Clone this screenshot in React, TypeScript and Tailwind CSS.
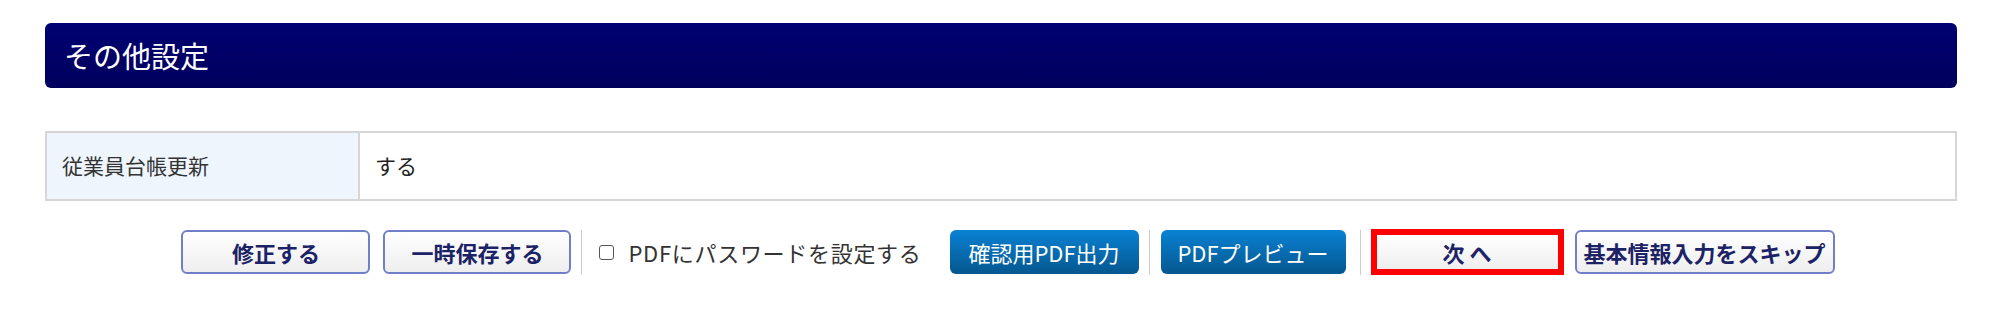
const font = { fontFamily: '"Noto Sans CJK JP", "Noto Sans", sans-serif' }

function WhiteButton({ label, className = "" }: { label: string; className?: string }) {
  return (
    <button
      className={`h-[44px] rounded-[6px] border-2 border-[#6f80c9] bg-gradient-to-b from-white to-[#eeeeee] text-[22px] font-bold leading-none text-[#1c2266] ${className}`}
    >
      {label}
    </button>
  )
}

function BlueButton({ label, className = "" }: { label: string; className?: string }) {
  return (
    <button
      className={`h-[44px] rounded-[6px] bg-gradient-to-b from-[#0a82d4] to-[#05578f] text-[22px] leading-none text-white ${className}`}
    >
      {label}
    </button>
  )
}

function Divider({ className = "" }: { className?: string }) {
  return <div className={`h-[45px] w-px bg-[#cccccc] ${className}`} />
}

export default function App() {
  return (
    <div className="min-h-[309px] bg-white pl-[45px] pr-[43px] pt-[23px]" style={font}>
      <div className="flex h-[65px] items-center rounded-[6px] bg-gradient-to-b from-[#000073] to-[#00005c] pl-[19px]">
        <h2 className="text-[29px] font-normal leading-none text-white">その他設定</h2>
      </div>

      <table className="mt-[43px] w-full border-collapse border-2 border-[#d6d6d6]">
        <tbody>
          <tr className="h-[68px]">
            <th className="w-[313px] border-r-2 border-[#d6d6d6] bg-[#eef5fc] pl-[15px] text-left text-[21px] font-normal text-[#333333]">
              従業員台帳更新
            </th>
            <td className="pl-[15px] text-[21px] text-[#222222]">する</td>
          </tr>
        </tbody>
      </table>

      <div className="mt-[28px] flex items-center justify-center pl-[14px]">
        <WhiteButton label="修正する" className="w-[189px]" />
        <WhiteButton label="一時保存する" className="ml-[13px] w-[188px]" />
        <Divider className="ml-[10px]" />
        <label className="ml-[17px] flex items-center text-[22px] text-[#333333]">
          <span className="h-[15px] w-[15px] rounded-[3px] border border-[#555555] bg-white" />
          <span className="ml-[14px] leading-none tracking-[0.7px]">PDFにパスワードを設定する</span>
        </label>
        <BlueButton label="確認用PDF出力" className="ml-[28px] w-[189px]" />
        <Divider className="ml-[10px]" />
        <BlueButton label="PDFプレビュー" className="ml-[11px] w-[185px]" />
        <Divider className="ml-[14px]" />
        <button className="ml-[10px] h-[46px] w-[193px] border-[6px] border-[#ff0000] bg-gradient-to-b from-white to-[#eeeeee] text-[22px] font-bold leading-none text-[#1c2266]">
          次 へ
        </button>
        <WhiteButton label="基本情報入力をスキップ" className="ml-[11px] w-[260px]" />
      </div>
    </div>
  )
}
